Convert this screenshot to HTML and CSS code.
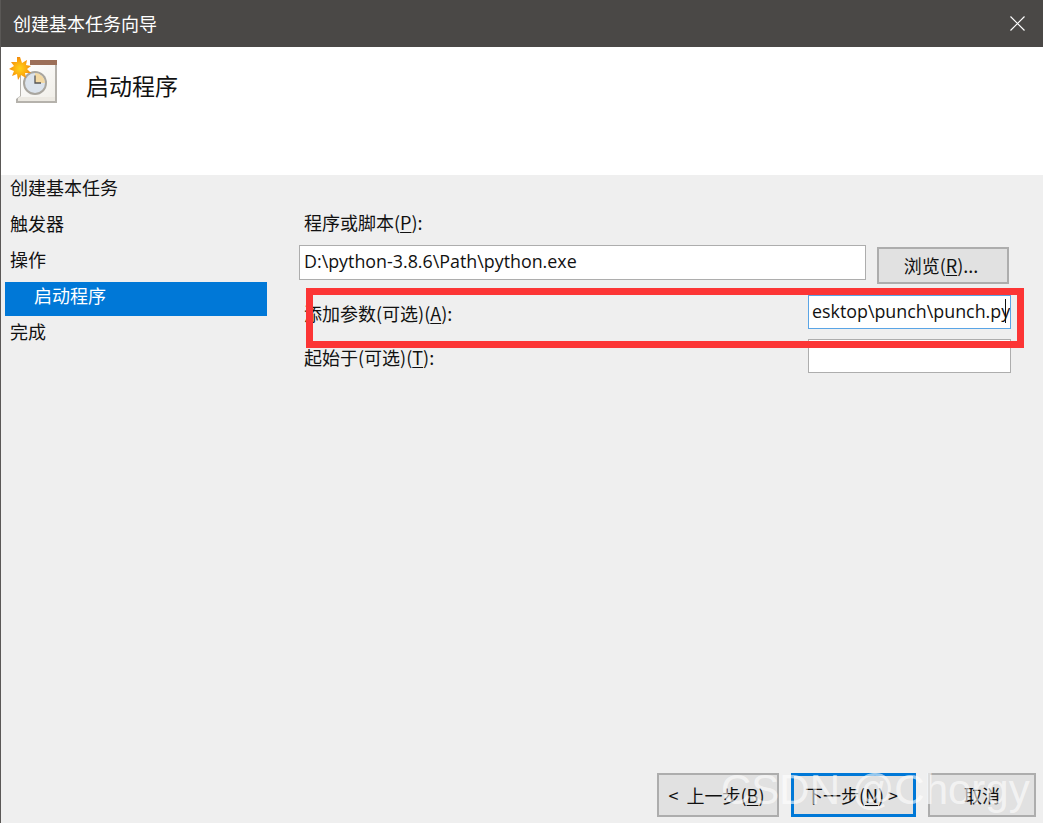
FILE: index.html
```html
<!DOCTYPE html>
<html lang="zh-CN">
<head>
<meta charset="utf-8">
<title>创建基本任务向导</title>
<link rel="stylesheet" href="styles.css">
</head>
<body>
<div class="window">
  <div class="titlebar">
    <span class="title">创建基本任务向导</span>
    <svg class="close" width="15" height="15" viewBox="0 0 15 15"><path d="M0.5 0.5L14.5 14.5M14.5 0.5L0.5 14.5" stroke="#fff" stroke-width="1.2" fill="none"/></svg>
  </div>
  <div class="header">
    <svg class="logo" width="50" height="50" viewBox="0 0 50 50">
      <defs>
        <radialGradient id="sun"><stop offset="0" stop-color="#ffd21a"/><stop offset="0.55" stop-color="#fdb00f"/><stop offset="1" stop-color="#f28a0c"/></radialGradient>
        <linearGradient id="page" x1="0" y1="0" x2="1" y2="1"><stop offset="0" stop-color="#ffffff"/><stop offset="1" stop-color="#f1efe9"/></linearGradient>
      </defs>
      <path d="M7 46v-4l4-3V8h37v38z" fill="#b5b2ac"/>
      <path d="M9 44v-3l3-2h32V9H13v31h33v4z" fill="#ece9e2"/>
      <rect x="12" y="8" width="34" height="32" fill="url(#page)"/>
      <rect x="21" y="3" width="27" height="5" fill="#9c6f58"/>
      <circle cx="26" cy="26" r="12" fill="#a9a69f"/>
      <circle cx="26" cy="26" r="10" fill="#dbe3ec"/>
      <path d="M26 16a10 10 0 0 1 10 10H26z" fill="#f3d9a4"/>
      <path d="M26 18.500v7.500h6" stroke="#555" stroke-width="1.300" fill="none"/>
      <path d="M11 0l2 6 5-3-1 5 5 1-4 3 4 4-6 0 1 5-5-3-3 5-1-6-5 2 2-5-5-2 5-3-3-4 6 0 0-5z" fill="url(#sun)"/>
    </svg>
    <span class="heading">启动程序</span>
  </div>
  <div class="body">
    <nav class="steps">
      <div class="step">创建基本任务</div>
      <div class="step">触发器</div>
      <div class="step">操作</div>
      <div class="step active">启动程序</div>
      <div class="step">完成</div>
    </nav>
    <main class="form">
      <div class="label label-first">程序或脚本(<u>P</u>):</div>
      <div class="row-program">
        <div class="field field-program">D:\python-3.8.6\Path\python.exe</div>
        <div class="btn btn-browse">浏览(<u>R</u>)...</div>
      </div>
      <div class="row row-args">
        <div class="label label-low">添加参数(可选)(<u>A</u>):</div>
        <div class="field field-small focused">esktop\punch\punch.py<i class="caret"></i></div>
      </div>
      <div class="row row-start">
        <div class="label label-low">起始于(可选)(<u>T</u>):</div>
        <div class="field field-small"></div>
      </div>
    </main>
  </div>
  <div class="footer">
    <div class="btn btn-foot btn-prev">&lt;&nbsp; 上一步(<u>B</u>)</div>
    <div class="btn btn-foot btn-primary">下一步(<u>N</u>) &gt;</div>
    <div class="btn btn-foot btn-cancel">取消</div>
  </div>
  <div class="redbox"></div>
  <div class="watermark">CSDN @Chorgy</div>
</div>
</body>
</html>
```
FILE: styles.css
```css
* { box-sizing: border-box; }
html, body { margin: 0; padding: 0; }
body { width: 1043px; height: 823px; overflow: hidden; font-family: "Noto Sans CJK SC", "Noto Sans", sans-serif; font-size: 18px; color: #111; }
u { text-underline-offset: 2px; }
.window { position: relative; width: 1043px; height: 823px; display: flex; flex-direction: column; background: #efefef; border-left: 1px solid #5a5856; }
.titlebar { height: 47px; flex: none; background: #4a4846; display: flex; align-items: center; justify-content: space-between; padding: 0 18px 0 12px; color: #fff; font-size: 18px; }
.title { line-height: 47px; }
.close { display: block; }
.header { height: 128px; flex: none; background: #fff; display: flex; align-items: flex-start; }
.logo { margin: 10px 0 0 8px; flex: none; overflow: visible; }
.heading { font-size: 23px; line-height: 30px; margin: 23px 0 0 27px; color: #111; }
.body { flex: 1; display: flex; min-height: 0; }
.steps { width: 266px; flex: none; padding: 0 0 0 4px; margin-top: -1px; }
.step { height: 36px; line-height: 26px; padding-left: 5px; font-size: 18px; }
.step.active { height: 34px; line-height: 26px; margin-bottom: 2px; background: #0078d7; color: #fff; padding-left: 29px; }
.form { flex: 1; padding: 34px 32px 0 32px; display: flex; flex-direction: column; }
.label { font-size: 18px; line-height: 26px; padding-left: 5px; }
.label-first { height: 36px; }
.label-low { padding-top: 2px; }
.row-program { display: flex; align-items: flex-start; }
.field { background: #fff; border: 1px solid #adadad; font-size: 17.85px; line-height: 30px; padding-left: 4px; white-space: nowrap; overflow: hidden; font-family: "Open Sans", sans-serif; position: relative; }
.field-program { width: 567px; height: 35px; }
.btn { background: #e1e1e1; border: 2px solid #adadad; display: flex; align-items: center; justify-content: center; font-size: 18px; }
.btn-browse { width: 132px; height: 37px; margin: 2px 0 0 11px; padding: 0 4px 2px 0; }
.row { display: flex; justify-content: space-between; align-items: center; }
.row-args { margin-top: 11px; }
.row-start { margin-top: 10px; }
.field-small { width: 203px; height: 34px; flex: none; }
.focused { border-color: #5aa5e6; padding-left: 3px; }
.caret { position: absolute; right: 4px; top: 3px; width: 1px; height: 24px; background: #111; }
.footer { position: absolute; left: 656px; top: 773px; display: flex; gap: 12px; }
.btn-foot { height: 44px; width: 122px; }
.btn-prev { padding-right: 3px; }
.btn-primary { width: 125px; border: 3px solid #0078d7; padding-right: 4px; }
.btn-cancel { width: 108px; }
.redbox { position: absolute; left: 305px; top: 288px; width: 718px; height: 60px; border: 7px solid #fc3535; }
.watermark { position: absolute; left: 720px; top: 760px; font-family: "Liberation Sans", sans-serif; font-size: 42px; line-height: 60px; color: rgba(255,255,255,.62); white-space: nowrap; }
```
